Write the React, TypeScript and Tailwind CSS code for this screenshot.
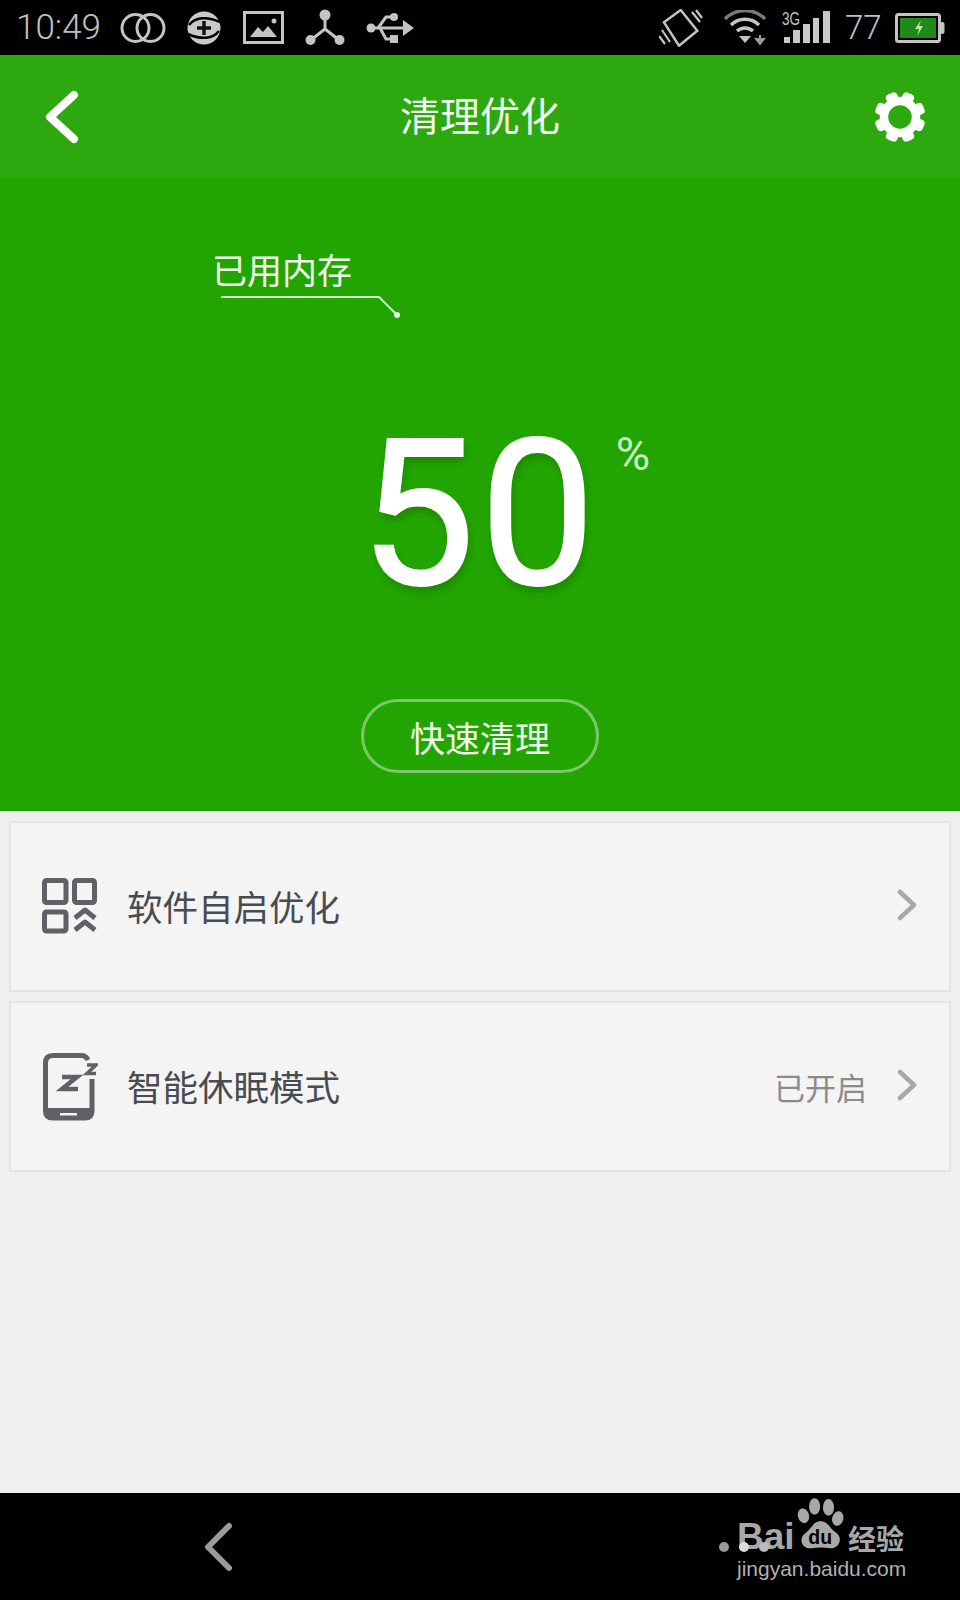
import React from 'react';

const CJK = "font-['Noto_Sans_CJK_SC',sans-serif]";

const GearIcon = () => (
  <svg width="54" height="54" viewBox="0 0 54 54" fill="#fff">
    {[0, 45, 90, 135, 180, 225, 270, 315].map(a => (
      <rect key={a} x="21" y="1.500" width="12" height="12" rx="4" transform={`rotate(${a + 22.5} 27 27)`} />
    ))}
    <circle cx="27" cy="27" r="16" fill="none" stroke="#fff" strokeWidth="8.500" />
  </svg>
);

const StatusLeftIcons = () => (
  <>
    <svg width="46" height="32" viewBox="0 0 46 32" fill="none" stroke="#c4c4c4" strokeWidth="3">
      <circle cx="15.5" cy="16" r="13.5" />
      <circle cx="30.5" cy="16" r="13.5" />
    </svg>
    <svg width="34" height="34" viewBox="0 0 34 34" className="ml-[21px]">
      <circle cx="17" cy="17" r="16.500" fill="#c9c9c9" />
      <path d="M2 14 C8 6 20 5 33 11" fill="none" stroke="#000" strokeWidth="2.500" />
      <path d="M32 20 C26 28 14 29 1 23" fill="none" stroke="#000" strokeWidth="2.500" />
      <path d="M17 10v14M10 17h14" stroke="#111" strokeWidth="3.500" />
    </svg>
    <svg width="41" height="33" viewBox="0 0 41 33" className="ml-[22px]">
      <rect x="1.500" y="1.500" width="38" height="30" fill="none" stroke="#c4c4c4" strokeWidth="3" />
      <path d="M7 26 L15 16 L20 21 L25 15 L34 26 Z" fill="#c4c4c4" />
      <circle cx="31" cy="10" r="2.500" fill="#c4c4c4" />
    </svg>
    <svg width="40" height="37" viewBox="0 0 40 37" className="ml-[21px]" fill="#c4c4c4">
      <path d="M20 6 V20 L6 31 M20 20 L34 31" stroke="#c4c4c4" strokeWidth="3" fill="none" />
      <circle cx="20" cy="6" r="5.500" />
      <circle cx="5.500" cy="31" r="5" />
      <circle cx="34.500" cy="31" r="5" />
    </svg>
    <svg width="48" height="32" viewBox="0 0 48 32" className="ml-[21px]" fill="#c4c4c4">
      <circle cx="5" cy="16" r="4.500" />
      <path d="M5 16 H40" stroke="#c4c4c4" strokeWidth="3" />
      <path d="M37 8 L48 16 L37 24 Z" />
      <path d="M12 16 L20 5 H26 M14 16 L20 27 H26" fill="none" stroke="#c4c4c4" strokeWidth="3" />
      <circle cx="28" cy="5" r="4" />
      <rect x="24" y="23" width="8" height="8" />
    </svg>
  </>
);

const StatusRightIcons = () => (
  <>
    <svg width="44" height="38" viewBox="0 0 44 38" fill="none" stroke="#c4c4c4">
      <path d="M21.700 1 L38.300 21.700 L20 36.700 L5 13.300 Z" strokeWidth="2.500" />
      <path d="M33 3 L41 13 M37 1 L43 9 M3 21 L11 33 M0 27 L6 35" strokeWidth="2.200" />
    </svg>
    <svg width="42" height="35" viewBox="0 0 42 35" className="ml-[21px]" fill="none">
      <path d="M1 9 A28 28 0 0 1 41 9" stroke="#7a7a7a" strokeWidth="3.500" />
      <path d="M7 15 A20 20 0 0 1 35 15" stroke="#c4c4c4" strokeWidth="3.500" />
      <path d="M13 21 A12 12 0 0 1 29 21" stroke="#c4c4c4" strokeWidth="3.500" />
      <path d="M15 26 H27 L21 33 Z" fill="#c4c4c4" />
      <path d="M36 25 V31 M32 29 H40 L36 34 Z" fill="#9a9a9a" stroke="#9a9a9a" strokeWidth="2" />
    </svg>
    <div className="ml-[16px] relative w-[48px] h-[33px]">
      <svg width="48" height="33" viewBox="0 0 48 33" fill="#c9c9c9" className="absolute inset-0">
        <rect x="2" y="26" width="6" height="6" />
        <rect x="11" y="19" width="7" height="13" />
        <rect x="21" y="13" width="7" height="19" />
        <rect x="31" y="7" width="6" height="25" />
        <rect x="41" y="0" width="7" height="32" />
      </svg>
      <span className="absolute left-0 top-[-1px] text-[18px] leading-[18px] text-[#c4c4c4] font-['Liberation_Sans',sans-serif] scale-x-75 origin-left">3G</span>
    </div>
    <span className="ml-[15px] w-[35px] text-[33px] leading-none text-[#c0c0c0] font-['Roboto',sans-serif] font-light">77</span>
    <svg width="50" height="30" viewBox="0 0 50 30" className="ml-[15px]">
      <rect x="1.500" y="1.500" width="43" height="27" rx="2" fill="none" stroke="#c4c4c4" strokeWidth="3" />
      <rect x="5" y="5" width="36" height="20" fill="#1f8a15" />
      <rect x="45" y="9" width="4.500" height="12" rx="2" fill="#c4c4c4" />
      <path d="M26 7 L20 16 H24 L22 23 L28 13 H24 Z" fill="#b8e6ae" />
    </svg>
  </>
);

const AppsIcon = () => (
  <svg width="56" height="56" viewBox="0 0 56 56" fill="none" stroke="#5e6166" strokeWidth="5" strokeLinejoin="round" className="mt-[-2px]">
    <rect x="2.500" y="2.500" width="21.500" height="22" rx="2" />
    <rect x="32.500" y="2.500" width="20" height="22" rx="2" />
    <rect x="2.500" y="34" width="21.500" height="19" rx="2" />
    <path d="M33 40 L43 32 L53 40 M33 52 L43 44 L53 52" strokeWidth="5" />
  </svg>
);

const SleepIcon = () => (
  <svg width="56" height="70" viewBox="0 0 56 70" fill="none">
    <path d="M46 8 Q44 3.500 39 3.500 H11 Q3.500 3.500 3.500 11 V59 Q3.500 66 11 66 H43 Q50 66 50 59 V27" stroke="#5e6166" strokeWidth="5" />
    <path d="M3.500 56 H50 V59 Q50 67 43 67 H11 Q3.500 67 3.500 59 Z" fill="#5e6166" />
    <rect x="18" y="61" width="17" height="2.500" fill="#f4f4f4" />
    <path d="M20 25 H35 L20 37 H36" stroke="#5e6166" strokeWidth="4.500" />
    <path d="M45 13 H54 L45 21.500 H54" stroke="#5e6166" strokeWidth="3.500" />
  </svg>
);

const RowChevron = () => (
  <svg width="20" height="32" viewBox="0 0 20 32" fill="none" stroke="#a6a9a9" strokeWidth="4.500" strokeLinecap="round" strokeLinejoin="round" className="mt-[-3px]">
    <path d="M3 3 L17 16 L3 29" />
  </svg>
);

const ListRow = ({ icon, label, status }: { icon: React.ReactNode; label: string; status?: string }) => (
  <div className="h-[171px] flex items-center bg-[#f4f4f4] border-2 border-[#e3e3e3] pl-[31px] pr-[32px]">
    <div className="w-[56px] flex justify-center">{icon}</div>
    <span className={`ml-[29px] mt-[-2px] text-[35.5px] leading-none text-[#484b50] ${CJK}`}>{label}</span>
    <div className="ml-auto flex items-center">
      {status && <span className={`mr-[30px] text-[31px] leading-none text-[#8b8b8b] ${CJK}`}>{status}</span>}
      <RowChevron />
    </div>
  </div>
);

const BaiduMark = () => (
  <div className="absolute left-[719px] top-[5px] w-[200px] h-[95px]">
    <span className="absolute left-[18px] top-[20px] text-[37px] leading-none font-bold text-[#a8a8a8] font-['Liberation_Sans',sans-serif]">Bai</span>
    <span className="absolute left-[0px] top-[44px] w-[10px] h-[10px] rounded-full bg-[#999]"></span>
    <span className="absolute left-[20px] top-[44px] w-[10px] h-[10px] rounded-full bg-[#ddd]"></span>
    <span className="absolute left-[40px] top-[44px] w-[10px] h-[10px] rounded-full bg-[#bbb]"></span>
    <svg width="50" height="54" viewBox="0 0 54 58" className="absolute left-[78px] top-[0px]" fill="#a8a8a8">
      <ellipse cx="7" cy="19" rx="6" ry="8" transform="rotate(-15 7 19)" />
      <ellipse cx="19" cy="9" rx="6" ry="9" />
      <ellipse cx="34" cy="10" rx="6" ry="9" />
      <ellipse cx="44" cy="22" rx="6" ry="8" transform="rotate(15 44 22)" />
      <path d="M26 25 C34 25 35 33 42 37 C50 42 46 55 36 54 C30 53 22 53 16 54 C5 55 1 44 9 38 C16 33 17 25 26 25 Z" />
      <text x="25" y="49" textAnchor="middle" fontSize="21" fontWeight="700" fill="#000" fontFamily="Liberation Sans, sans-serif">du</text>
    </svg>
    <span className={`absolute left-[129px] top-[23px] text-[28px] leading-[34px] font-bold text-[#a8a8a8] ${CJK}`}>经验</span>
    <span className="absolute left-[18px] top-[57px] text-[21px] leading-[28px] text-[#b0b0b0] font-['Liberation_Sans',sans-serif]">jingyan.baidu.com</span>
  </div>
);

export default function App() {
  return (
    <div className="w-[960px] h-[1600px] flex flex-col bg-[#efefef] overflow-hidden">
      <div className="h-[55px] bg-black flex items-center pl-[16px] pr-[15px]">
        <span className="w-[104px] text-[35px] leading-none text-[#c0c0c0] font-['Roboto',sans-serif] font-light">10:49</span>
        <StatusLeftIcons />
        <div className="ml-auto flex items-center">
          <StatusRightIcons />
        </div>
      </div>

      <div className="h-[123px] bg-[#2ea80f] flex items-center pl-[44px] pr-[33px]">
        <div className="w-[200px]">
          <svg width="36" height="54" viewBox="0 0 36 54" fill="none" stroke="#fff" strokeWidth="8" strokeLinecap="round" strokeLinejoin="round" className="block">
            <path d="M30 5 L6 27 L30 49" />
          </svg>
        </div>
        <span className={`flex-1 mt-[-6px] ml-[-11px] text-center text-[40px] leading-none text-[#f2fbef] ${CJK}`}>清理优化</span>
        <div className="w-[200px] flex justify-end">
          <GearIcon />
        </div>
      </div>

      <div className="h-[633px] bg-[#22a500] flex flex-col">
        <div className="pt-[66px] pl-[212px]">
          <div className={`text-[35px] leading-[50px] text-[#f2fbef] ${CJK}`}>已用内存</div>
          <svg width="190" height="26" viewBox="0 0 190 26" fill="none" className="block mt-[1px]">
            <path d="M9 2 H167 L185 20" stroke="#d6f0cf" strokeWidth="2" />
            <circle cx="185" cy="20" r="3" fill="#e8f7e4" />
          </svg>
        </div>
        <div className="mt-[83px] self-center relative">
          <span className="block text-[205px] leading-[220px] tracking-[5px] text-white font-['Roboto',sans-serif] font-normal [-webkit-text-stroke:2px_white] [text-shadow:2px_6px_8px_rgba(0,0,0,0.18)]">50</span>
          <span className="absolute left-[256px] top-[26px] text-[47px] leading-none text-[#c8edc0] font-['Roboto',sans-serif] font-normal">%</span>
        </div>
        <button className={`mt-[75px] self-center w-[238px] h-[74px] rounded-full border-[3px] border-white/40 text-[35px] leading-none text-[#f2fbef] ${CJK}`}>
          快速清理
        </button>
      </div>

      <div className="flex-1 flex flex-col gap-[9px] px-[9px] pt-[10px]">
        <ListRow icon={<AppsIcon />} label="软件自启优化" />
        <ListRow icon={<SleepIcon />} label="智能休眠模式" status="已开启" />
      </div>

      <div className="relative h-[107px] bg-black flex items-center pl-[203px]">
        <svg width="30" height="50" viewBox="0 0 30 50" fill="none" stroke="#9a9a9a" strokeWidth="6" strokeLinecap="round" strokeLinejoin="round">
          <path d="M26 4 L5 25 L26 46" />
        </svg>
        <BaiduMark />
      </div>
    </div>
  );
}
